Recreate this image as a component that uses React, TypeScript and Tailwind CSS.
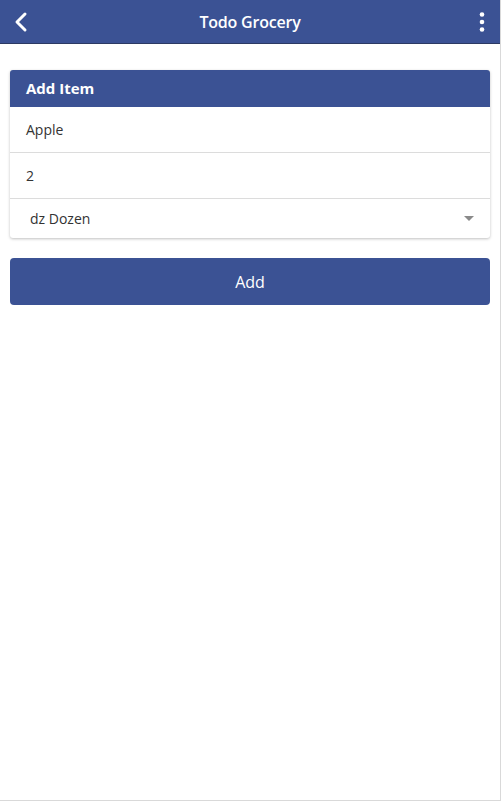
export default function App() {
  return (
    <div className="w-[501px] h-[801px] bg-white" style={{ fontFamily: '"Open Sans", "Noto Sans", sans-serif' }}>
      <div className="w-[501px] h-[801px] border-r border-b border-[#d9d9d9] flex flex-col">
        <header className="h-[44px] bg-[#3b5294] border-b border-[#2c3a63] flex items-center justify-between px-[13px] shrink-0">
          <svg width="16" height="22" viewBox="0 0 16 22" fill="none">
            <path d="M12 3 L4 11 L12 19" stroke="white" strokeWidth="3" strokeLinecap="round" strokeLinejoin="round" />
          </svg>
          <h1 className="text-white font-semibold text-[16px] tracking-[-0.2px]">Todo Grocery</h1>
          <svg width="16" height="22" viewBox="0 0 16 22">
            <circle cx="11" cy="3.5" r="2.3" fill="white" />
            <circle cx="11" cy="11" r="2.3" fill="white" />
            <circle cx="11" cy="18.5" r="2.3" fill="white" />
          </svg>
        </header>

        <div className="px-[10px] pt-[26px] flex flex-col gap-[20px]">
          <div className="rounded-[3px] bg-white shadow-[0_1px_3px_rgba(0,0,0,0.25)] overflow-hidden">
            <div className="h-[37px] bg-[#3b5294] flex items-center px-[16px]">
              <span className="text-white font-bold text-[15px]">Add Item</span>
            </div>
            <div className="h-[46px] border-b border-[#dcdcdc] flex items-center px-[16px] text-[14px] text-[#333]">Apple</div>
            <div className="h-[46px] border-b border-[#dcdcdc] flex items-center px-[16px] text-[14px] text-[#333]">2</div>
            <div className="h-[39px] flex items-center justify-between pl-[20px] pr-[16px] text-[14px] text-[#333]">
              <span>dz Dozen</span>
              <svg width="10" height="6" viewBox="0 0 10 6">
                <path d="M0 0 L10 0 L5 5 Z" fill="#8a8a8a" />
              </svg>
            </div>
          </div>

          <button className="h-[47px] w-full rounded-[4px] bg-[#3b5294] text-white text-[16px] font-medium flex items-center justify-center">
            Add
          </button>
        </div>
      </div>
    </div>
  );
}
